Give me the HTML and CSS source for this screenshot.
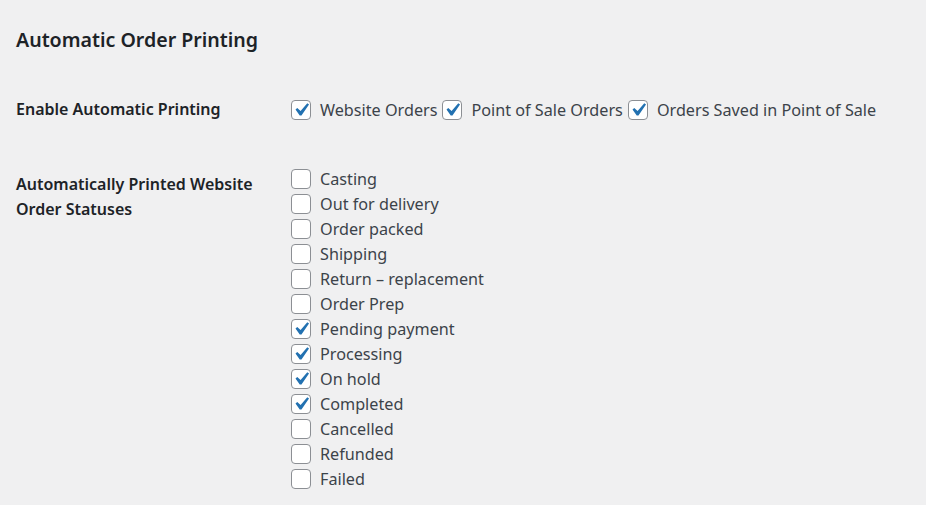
FILE: index.html
```html
<!DOCTYPE html>
<html lang="en">
<head>
  <meta charset="UTF-8">
  <title>Automatic Order Printing</title>
  <link rel="stylesheet" href="styles.css">
</head>
<body>
  <div class="wrap">
    <h2>Automatic Order Printing</h2>

    <div class="form-row">
      <div class="th">Enable Automatic Printing</div>
      <div class="td inline">
        <label class="check"><span class="box checked"><svg viewBox="0 0 20 20"><path d="M14.83 4.89l1.34.94-5.81 8.38H9.02L5.78 9.670l1.34-1.25 2.57 2.4z"/></svg></span>Website Orders</label>
        <label class="check"><span class="box checked"><svg viewBox="0 0 20 20"><path d="M14.83 4.89l1.34.94-5.81 8.38H9.02L5.78 9.67l1.34-1.25 2.57 2.4z"/></svg></span>Point of Sale Orders</label>
        <label class="check"><span class="box checked"><svg viewBox="0 0 20 20"><path d="M14.83 4.89l1.34.94-5.81 8.38H9.02L5.78 9.67l1.34-1.25 2.57 2.4z"/></svg></span>Orders Saved in Point of Sale</label>
      </div>
    </div>

    <div class="form-row">
      <div class="th">Automatically Printed Website Order Statuses</div>
      <div class="td list">
        <label class="check"><span class="box"></span>Casting</label>
        <label class="check"><span class="box"></span>Out for delivery</label>
        <label class="check"><span class="box"></span>Order packed</label>
        <label class="check"><span class="box"></span>Shipping</label>
        <label class="check"><span class="box"></span>Return – replacement</label>
        <label class="check"><span class="box"></span>Order Prep</label>
        <label class="check"><span class="box checked"><svg viewBox="0 0 20 20"><path d="M14.83 4.89l1.34.94-5.81 8.38H9.02L5.78 9.67l1.34-1.25 2.57 2.4z"/></svg></span>Pending payment</label>
        <label class="check"><span class="box checked"><svg viewBox="0 0 20 20"><path d="M14.83 4.89l1.34.94-5.81 8.38H9.02L5.78 9.67l1.34-1.25 2.57 2.4z"/></svg></span>Processing</label>
        <label class="check"><span class="box checked"><svg viewBox="0 0 20 20"><path d="M14.83 4.89l1.34.94-5.81 8.38H9.02L5.78 9.67l1.34-1.25 2.57 2.4z"/></svg></span>On hold</label>
        <label class="check"><span class="box checked"><svg viewBox="0 0 20 20"><path d="M14.83 4.89l1.34.94-5.81 8.38H9.02L5.78 9.67l1.34-1.25 2.57 2.4z"/></svg></span>Completed</label>
        <label class="check"><span class="box"></span>Cancelled</label>
        <label class="check"><span class="box"></span>Refunded</label>
        <label class="check"><span class="box"></span>Failed</label>
      </div>
    </div>
  </div>
</body>
</html>
```

FILE: styles.css
```css
body {
  margin: 0;
  padding: 0;
  background-color: #f0f0f1;
  font-family: "Noto Sans", "Open Sans", sans-serif;
  color: #3c434a;
}

.wrap {
  padding: 27px 16px 0 16px;
}

h2 {
  margin: 0 0 44px 0;
  font-size: 19.6px;
  font-weight: 600;
  line-height: 26px;
  color: #1d2327;
}

.form-row {
  display: flex;
  margin-bottom: 50px;
}

.form-row:last-child {
  margin-bottom: 0;
}

.th {
  width: 250px;
  flex-shrink: 0;
  padding-right: 25px;
  font-size: 16px;
  font-weight: 600;
  line-height: 25px;
  color: #1d2327;
}

.list {
  display: flex;
  flex-direction: column;
  margin-top: -6px;
}

.inline {
  display: flex;
}

.check {
  display: flex;
  align-items: center;
  height: 25px;
  font-size: 16.2px;
  margin-right: 5px;
}

.box {
  width: 18px;
  height: 18px;
  border: 1px solid #8c8f94;
  border-radius: 4px;
  background-color: #fff;
  margin-right: 9px;
  display: flex;
  align-items: center;
  justify-content: center;
  flex-shrink: 0;
}

.box svg {
  display: block;
  flex-shrink: 0;
  width: 26px;
  height: 26px;
  margin: -4px;
  fill: #2271b1;
}
```
